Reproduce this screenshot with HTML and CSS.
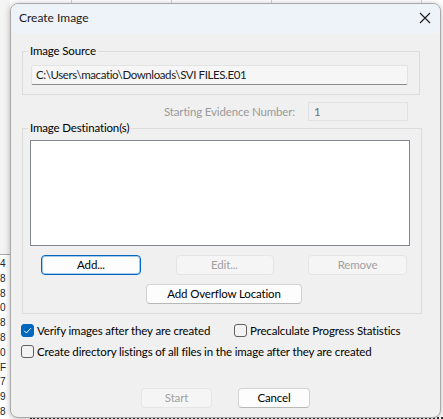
FILE: index.html
```html
<!DOCTYPE html>
<html>
<head>
<meta charset="utf-8">
<link rel="stylesheet" href="styles.css">
</head>
<body>
<div class="desktop">
  <div class="bg-cols"><span class="c1"></span><span class="c2"></span><span class="c3"></span><span class="c4"></span></div>
  <div class="bg-left">
    <div class="bg-left-top"></div>
    <div class="bg-digits">4<br>8<br>8<br>0<br>8<br>8<br>0<br>F<br>7<br>9<br>8</div>
  </div>
  <div class="bg-bottom"></div>
  <div class="window">
    <div class="titlebar">
      <span class="title">Create Image</span>
      <svg class="close" width="12" height="12" viewBox="0 0 12 12"><path d="M1 1 L11 11 M11 1 L1 11" stroke="#1a1a1a" stroke-width="1.1" fill="none"/></svg>
    </div>
    <div class="content">
      <fieldset class="group group-source">
        <legend>Image Source</legend>
        <div class="field">C:\Users\macatio\Downloads\SVI FILES.E01</div>
      </fieldset>
      <div class="evidence-row">
        <span class="label-disabled">Starting Evidence Number:</span>
        <div class="field-disabled">1</div>
      </div>
      <fieldset class="group group-dest">
        <legend>Image Destination(s)</legend>
        <div class="listbox"></div>
        <div class="btn-row">
          <button class="btn btn-focus w-add">Add...</button>
          <button class="btn btn-disabled w-edit">Edit...</button>
          <button class="btn btn-disabled w-remove">Remove</button>
        </div>
        <div class="overflow-row">
          <button class="btn w-overflow">Add Overflow Location</button>
        </div>
      </fieldset>
      <div class="checks">
        <div class="check-row">
          <span class="check w-verify"><span class="box checked"><svg width="13" height="13" viewBox="0 0 13 13"><path d="M3.2 6.8 L5.4 9 L9.9 4.2" stroke="#fff" stroke-width="1" fill="none"/></svg></span>Verify images after they are created</span>
          <span class="check"><span class="box"></span>Precalculate Progress Statistics</span>
        </div>
        <div class="check-row">
          <span class="check"><span class="box"></span>Create directory listings of all files in the image after they are created</span>
        </div>
      </div>
      <div class="footer">
        <button class="btn btn-disabled w-start">Start</button>
        <button class="btn w-cancel">Cancel</button>
      </div>
    </div>
  </div>
</div>
</body>
</html>
```
FILE: styles.css
```css
* { box-sizing: border-box; }
html, body { margin: 0; padding: 0; }
body { font-family: Lato, "Noto Sans", sans-serif; font-size: 11.5px; letter-spacing: -0.15px; color: #000; }

.desktop {
  position: relative;
  width: 443px;
  height: 419px;
  background: #ffffff;
  overflow: hidden;
}

.bg-cols { display: flex; height: 12px; }
.bg-cols span { display: block; height: 12px; border-right: 1px solid #d4d4d4; }
.bg-cols .c1 { width: 72px; }
.bg-cols .c2 { width: 100px; }
.bg-cols .c3 { width: 100px; }
.bg-cols .c4 { width: 150px; }

.bg-left { position: absolute; left: 0; top: 0; width: 10px; }
.bg-left-top { height: 255px; background: #f4f4f4; border-bottom: 1px solid #a8a8a8; }
.bg-digits {
  margin-left: 0;
  margin-top: 2px;
  font-family: "Liberation Sans", sans-serif;
  font-size: 10px;
  letter-spacing: 0;
  line-height: 14.8px;
  color: #222;
}

.bg-bottom {
  position: absolute;
  left: 30px;
  right: 0;
  top: 417px;
  border-top: 2px dotted #333;
}

.window {
  position: absolute;
  left: 10px;
  top: 3px;
  width: 431px;
  height: 415px;
  background: #f0f0f0;
  border: 1px solid #a9a9a9;
  border-radius: 8px;
  box-shadow: 0 1px 6px rgba(0,0,0,0.28);
  overflow: hidden;
}

.titlebar {
  height: 29px;
  background: #eef3f9;
  display: flex;
  align-items: center;
  justify-content: space-between;
  padding: 0 8px 2px 8px;
}
.title { font-size: 12px; letter-spacing: 0; color: #1a1a1a; }
.close { display: block; margin-right: 1px; margin-top: 1px; }

.content {
  padding: 11px 20px 0 11px;
}

.group {
  margin: 0;
  padding: 0 11px 9px 8px;
  border: 1px solid #dcdcdc;
  width: 398px;
}
.group legend {
  margin-left: -3px;
  padding: 0 2px;
  line-height: 14px;
  font-size: 11.5px;
}

.field {
  margin-top: 7px;
  height: 20px;
  background: #f6f6f6;
  border: 1px solid #e3e3e3;
  border-bottom: 1px solid #8c8c8c;
  border-radius: 2px;
  padding: 0 4px;
  line-height: 18px;
  letter-spacing: -0.4px;
  color: #1a1a1a;
  white-space: nowrap;
}

.evidence-row {
  display: flex;
  justify-content: flex-end;
  align-items: center;
  margin-top: 7px;
  padding-right: 12px;
  height: 19px;
  gap: 13px;
}
.label-disabled { color: #9a9a9a; }
.field-disabled {
  width: 100px;
  height: 19px;
  border: 1px solid #e2e2e2;
  background: #f0f0f0;
  padding: 0 5px;
  line-height: 17px;
  color: #6f6f6f;
}

.listbox {
  margin-top: 5px;
  margin-left: -1px;
  width: 380px;
  height: 106px;
  background: #fff;
  border: 1px solid #82878f;
}

.btn {
  font-family: inherit;
  font-size: 11.5px;
  letter-spacing: -0.15px;
  height: 20px;
  padding: 0;
  background: #fdfdfd;
  border: 1px solid #d2d2d2;
  border-bottom-color: #b8b8b8;
  border-radius: 4px;
  color: #000;
  line-height: 18px;
}
.btn-focus {
  border: 1px solid #0067c0;
  box-shadow: inset 0 0 0 1px rgba(0,103,192,0.35);
}
.btn-disabled {
  background: #f5f5f5;
  border: 1px solid #e5e5e5;
  color: #a0a0a0;
}

.btn-row {
  display: flex;
  justify-content: space-between;
  margin-top: 9px;
  margin-left: 10px;
  width: 366px;
}
.w-add { width: 100px; }
.w-edit { width: 98px; }
.w-remove { width: 99px; }

.overflow-row {
  display: flex;
  justify-content: center;
  margin-top: 9px;
  margin-left: 10px;
  width: 366px;
}
.w-overflow { width: 156px; }

.checks { margin-top: 7px; }
.check-row {
  display: flex;
  align-items: center;
  height: 18px;
  margin-bottom: 3px;
  margin-left: -1px;
}
.check { display: flex; align-items: center; gap: 3px; white-space: nowrap; }
.w-verify { width: 213px; }
.box {
  display: block;
  width: 13px;
  height: 13px;
  border: 1px solid #5f5f5f;
  border-radius: 3px;
  background: #f3f3f3;
}
.box.checked {
  background: #0067c0;
  border-color: #0067c0;
}
.box svg { display: block; margin: -1px; }

.footer {
  display: flex;
  gap: 26px;
  margin-top: 28px;
  padding-left: 119px;
}
.w-start { width: 71px; }
.w-cancel { width: 72px; }
```
